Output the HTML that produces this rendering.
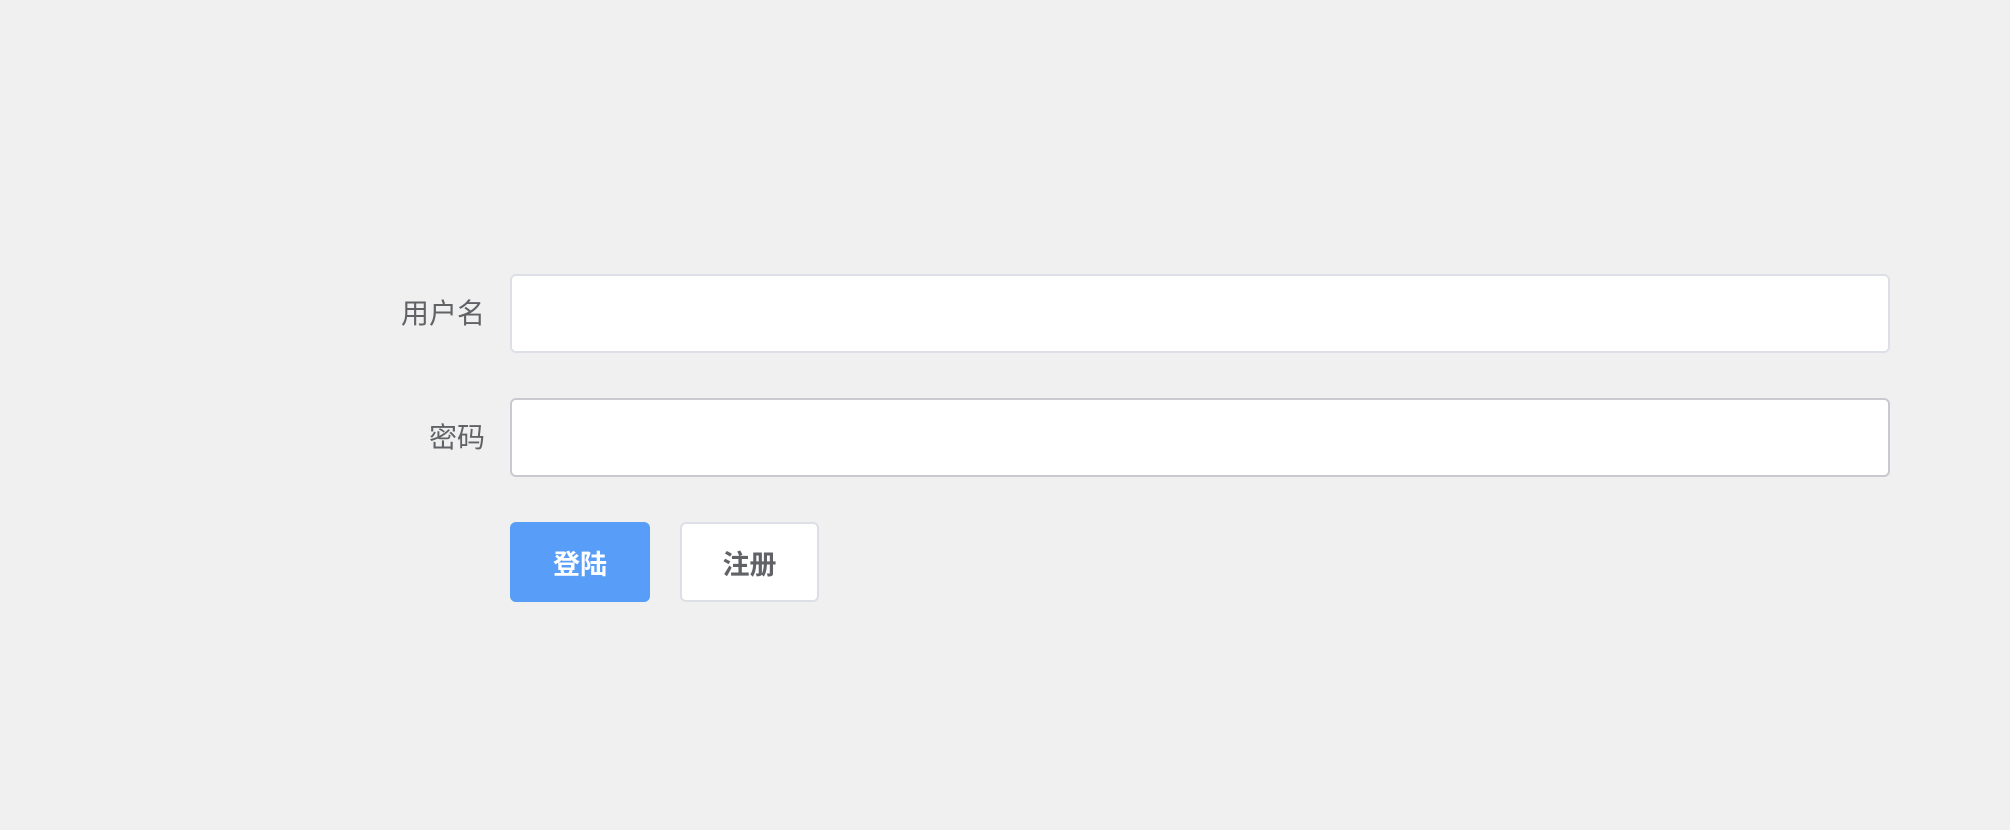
<!DOCTYPE html>
<html><head><meta charset="utf-8"><style>
html,body{margin:0;width:2010px;height:830px;background:#f0f0f0;font-family:"Liberation Sans","Noto Sans CJK SC",sans-serif;overflow:hidden}
.lbl{position:absolute;right:1525px;font-size:28px;color:#606266;line-height:30px;text-align:right}
.in{position:absolute;left:510px;width:1380px;background:#fff;border:2px solid #dcdfe6;border-radius:6px;box-sizing:border-box}
.btn{position:absolute;top:522px;height:80px;box-sizing:border-box;border-radius:6px;font-size:27px;font-weight:bold;display:flex;align-items:center;justify-content:center}
</style></head><body>
<div class="lbl" style="top:299px">用户名</div>
<div class="in" style="top:274px;height:79px"></div>
<div class="lbl" style="top:423px">密码</div>
<div class="in" style="top:398px;height:79px;border-color:#c8cad0"></div>
<div class="btn" style="left:510px;width:140px;background:#589ef8;color:#fff">登陆</div>
<div class="btn" style="left:680px;width:139px;background:#fff;border:2px solid #dcdfe6;color:#606266">注册</div>
</body></html>
